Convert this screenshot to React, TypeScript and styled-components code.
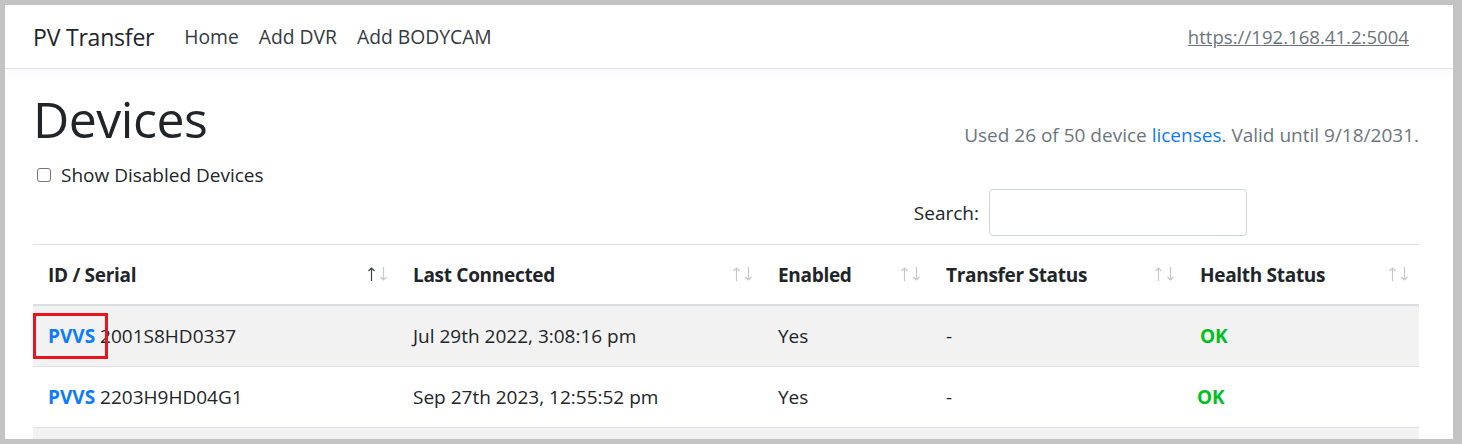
import React from "react";
import styled, { createGlobalStyle } from "styled-components";

const GlobalStyle = createGlobalStyle`
  html, body {
    margin: 0;
    padding: 0;
    background: #c3c3c3;
  }
  body {
    font-family: "Open Sans", "Noto Sans", "Liberation Sans", sans-serif;
    color: #212529;
  }
`;

const colors = {
  text: "#212529",
  muted: "#6c757d",
  link: "#0d7bfd",
  border: "#dee2e6",
  stripe: "#f2f2f2",
  ok: "#00c01e",
  arrowOn: "#3d4246",
  arrowOff: "#c6c9cc"
};

interface Device {
  serial: string;
  lastConnected: string;
  enabled: string;
  transfer: string;
  health: string;
  okShift?: number;
}

const devices: Device[] = [
  { serial: "2001S8HD0337", lastConnected: "Jul 29th 2022, 3:08:16 pm", enabled: "Yes", transfer: "-", health: "OK" },
  { serial: "2203H9HD04G1", lastConnected: "Sep 27th 2023, 12:55:52 pm", enabled: "Yes", transfer: "-", health: "OK", okShift: -3 },
  { serial: "", lastConnected: "", enabled: "", transfer: "", health: "" }
];

const columns = [
  { title: "ID / Serial", width: 365, sorted: true },
  { title: "Last Connected", width: 365 },
  { title: "Enabled", width: 168 },
  { title: "Transfer Status", width: 254 },
  { title: "Health Status", width: 234 }
];

const Frame = styled.div`
  margin: 5px 9px 5px 5px;
  height: 434px;
  background: #fff;
  overflow: hidden;
`;

const Navbar = styled.nav`
  height: 63px;
  display: flex;
  align-items: center;
  padding: 0 44px 0 28px;
  border-bottom: 1px solid ${colors.border};
  box-shadow: 0 3px 14px rgba(0, 0, 0, 0.04);
  position: relative;
`;

const Brand = styled.span`
  font-size: 23px;
  color: ${colors.text};
  margin-right: 30px;
  letter-spacing: -0.2px;
`;

const NavLink = styled.a`
  font-size: 19.3px;
  color: #343a40;
  margin-right: 20px;
  text-decoration: none;
`;

const UrlLink = styled.a`
  margin-left: auto;
  font-size: 18.6px;
  color: ${colors.muted};
  text-decoration: underline;
`;

const Content = styled.div`
  padding: 0 34px 0 28px;
`;

const TopRow = styled.div`
  display: flex;
  justify-content: space-between;
  align-items: flex-start;
`;

const LeftCol = styled.div`
  display: flex;
  flex-direction: column;
`;

const Title = styled.h1`
  font-size: 50px;
  font-weight: 500;
  margin: 19px 0 0 0;
  line-height: 62px;
  letter-spacing: -0.5px;
`;

const CheckRow = styled.label`
  display: flex;
  align-items: center;
  gap: 10px;
  margin: 12px 0 0 4px;
  font-size: 19px;
`;

const CheckBox = styled.span`
  width: 12px;
  height: 12px;
  border: 1px solid #767676;
  border-radius: 3px;
  background: #fff;
`;

const RightCol = styled.div`
  display: flex;
  flex-direction: column;
  align-items: flex-end;
`;

const License = styled.div`
  margin-top: 53px;
  font-size: 19px;
  color: ${colors.muted};
  line-height: 26px;
`;

const LicenseLink = styled.a`
  color: ${colors.link};
  text-decoration: none;
`;

const SearchRow = styled.div`
  display: flex;
  align-items: center;
  gap: 10px;
  margin: 41px 172px 8px 0;
  font-size: 19px;
`;

const SearchInput = styled.div`
  width: 256px;
  height: 45px;
  border: 1px solid #ced4da;
  border-radius: 4px;
`;

const Table = styled.div`
  border-top: 1px solid ${colors.border};
`;

const Row = styled.div<{ $striped?: boolean; $head?: boolean }>`
  display: flex;
  height: ${p => (p.$head ? "59px" : "60px")};
  background: ${p => (p.$striped ? colors.stripe : "#fff")};
  border-bottom: ${p => (p.$head ? "2px solid #dadde1" : `1px solid ${colors.border}`)};
  font-size: 19px;
`;

const Cell = styled.div<{ $w: number }>`
  width: ${p => p.$w}px;
  flex: none;
  display: flex;
  align-items: center;
  padding: 0 15px;
  box-sizing: border-box;
  position: relative;
`;

const HeadText = styled.span`
  font-weight: 700;
  font-size: 19px;
  letter-spacing: -0.3px;
`;

const SortArrows = styled.span`
  position: absolute;
  right: 11px;
  top: 22px;
  display: flex;
  gap: 5px;
`;

const ArrowIcon = ({ down, on }: { down?: boolean; on?: boolean }) => (
  <svg width="7" height="14" viewBox="0 0 7 14" style={{ transform: down ? "rotate(180deg)" : undefined }}>
    <path d="M3.5 1 V14 M0.5 4 L3.5 1 L6.5 4" fill="none" stroke={on ? colors.arrowOn : colors.arrowOff} strokeWidth="1.2" />
  </svg>
);

const Code = styled.a`
  color: ${colors.link};
  font-weight: 700;
  text-decoration: none;
  margin-right: 5px;
  position: relative;
`;

const Highlight = styled.span`
  position: absolute;
  left: -15px;
  right: -13px;
  top: -10px;
  bottom: -10px;
  border: 3px solid #e8141f;
`;

const OkText = styled.span`
  color: ${colors.ok};
  font-weight: 700;
`;

export default function App() {
  return (
    <>
      <GlobalStyle />
      <Frame>
        <Navbar>
          <Brand>PV Transfer</Brand>
          <NavLink>Home</NavLink>
          <NavLink>Add DVR</NavLink>
          <NavLink>Add BODYCAM</NavLink>
          <UrlLink>https://192.168.41.2:5004</UrlLink>
        </Navbar>
        <Content>
          <TopRow>
            <LeftCol>
              <Title>Devices</Title>
              <CheckRow>
                <CheckBox />
                Show Disabled Devices
              </CheckRow>
            </LeftCol>
            <RightCol>
              <License>
                Used 26 of 50 device <LicenseLink>licenses</LicenseLink>. Valid until 9/18/2031.
              </License>
              <SearchRow>
                Search:
                <SearchInput />
              </SearchRow>
            </RightCol>
          </TopRow>
          <Table>
            <Row $head>
              {columns.map(c => (
                <Cell key={c.title} $w={c.width}>
                  <HeadText>{c.title}</HeadText>
                  <SortArrows>
                    <ArrowIcon on={c.sorted} />
                    <ArrowIcon down />
                  </SortArrows>
                </Cell>
              ))}
            </Row>
            {devices.map((d, i) => (
              <Row key={i} $striped={i % 2 === 0}>
                <Cell $w={columns[0].width}>
                  {d.serial && (
                    <>
                      <Code>
                        PVVS
                        {i === 0 && <Highlight />}
                      </Code>
                      {d.serial}
                    </>
                  )}
                </Cell>
                <Cell $w={columns[1].width}>{d.lastConnected}</Cell>
                <Cell $w={columns[2].width}>{d.enabled}</Cell>
                <Cell $w={columns[3].width}>{d.transfer}</Cell>
                <Cell $w={columns[4].width}>
                  {d.health && <OkText style={{ marginLeft: d.okShift ?? 0 }}>{d.health}</OkText>}
                </Cell>
              </Row>
            ))}
          </Table>
        </Content>
      </Frame>
    </>
  );
}
